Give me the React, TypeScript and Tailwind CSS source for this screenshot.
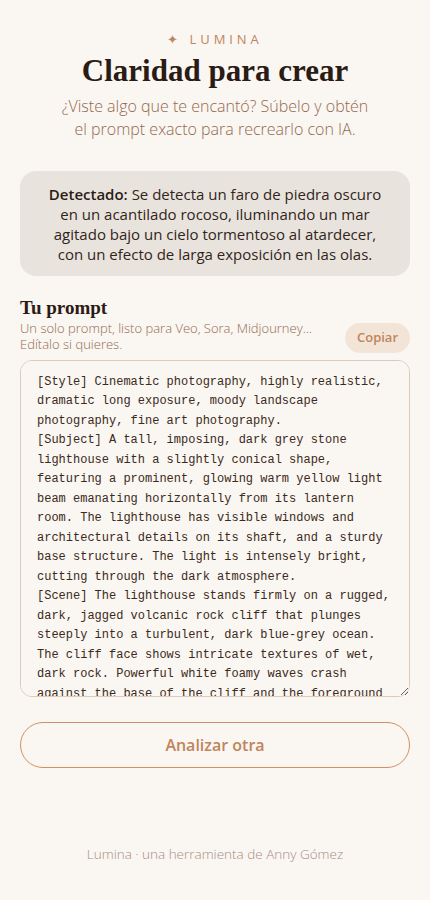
import React, { useState } from 'react';

const PROMPT = `[Style] Cinematic photography, highly realistic, dramatic long exposure, moody landscape photography, fine art photography.
[Subject] A tall, imposing, dark grey stone lighthouse with a slightly conical shape, featuring a prominent, glowing warm yellow light beam emanating horizontally from its lantern room. The lighthouse has visible windows and architectural details on its shaft, and a sturdy base structure. The light is intensely bright, cutting through the dark atmosphere.
[Scene] The lighthouse stands firmly on a rugged, dark, jagged volcanic rock cliff that plunges steeply into a turbulent, dark blue-grey ocean. The cliff face shows intricate textures of wet, dark rock. Powerful white foamy waves crash against the base of the cliff and the foreground rocks, their motion softened into a misty blur by the long exposure.`;

const sans = "font-['Open_Sans',sans-serif]";

export default function App() {
  const [prompt, setPrompt] = useState(PROMPT);

  return (
    <div className={`min-h-screen bg-[#faf6f2] ${sans}`}>
      <div className="flex flex-col px-5 pt-[30px] pb-10">
        {/* HEADER */}
        <div className="flex flex-col items-center text-center">
          <p className="text-[13px] font-medium tracking-[0.3em] text-[#c0855c]">✦ LUMINA</p>
          <h1 className="mt-[3px] font-['Liberation_Serif',serif] text-[31px] font-bold leading-[36px] text-[#2a1b14]">
            Claridad para crear
          </h1>
          <p className="mt-[6px] text-[16px] leading-[23px] font-light text-[#94694f]">
            ¿Viste algo que te encantó? Súbelo y obtén<br />el prompt exacto para recrearlo con IA.
          </p>
        </div>

        {/* DETECTED */}
        <div className="mt-[30px] rounded-2xl bg-[#e8e4dd] px-6 pt-[13px] pb-[12px] text-center text-[15px] leading-5 text-[#33241b]">
          <span className="font-semibold text-[#2a1b14]">Detectado:</span> Se detecta un faro de piedra oscuro en un acantilado rocoso, iluminando un mar agitado bajo un cielo tormentoso al atardecer, con un efecto de larga exposición en las olas.
        </div>

        {/* PROMPT */}
        <div className="mt-[20px] flex items-end justify-between gap-3">
          <div className="flex flex-col">
            <h2 className="font-['Liberation_Serif',serif] text-[19px] font-bold leading-6 text-[#2a1b14]">Tu prompt</h2>
            <p className="text-[13px] leading-4 font-light text-[#94694f]">
              Un solo prompt, listo para Veo, Sora, Midjourney…<br />Edítalo si quieres.
            </p>
          </div>
          <button className="mb-[-1px] rounded-full bg-[#f3e4d8] px-3 py-[5px] text-[13px] font-semibold text-[#c0855c]">
            Copiar
          </button>
        </div>

        <textarea
          value={prompt}
          onChange={(e) => setPrompt(e.target.value)}
          className="mt-2 h-[337px] w-full rounded-xl border border-[#dccabb] bg-[#faf6f2] px-4 pt-3 pb-2 font-['Liberation_Mono',monospace] text-[12px] leading-[19.5px] text-[#3a2a20] outline-none"
        />

        <button className="mt-[25px] h-[46px] w-full rounded-full border border-[#cf9164] text-[16px] font-semibold text-[#c0855c]">
          Analizar otra
        </button>

        <p className="mt-[76px] text-center text-[13.5px] font-light text-[#a88f80]">
          Lumina · una herramienta de Anny Gómez
        </p>
      </div>
    </div>
  );
}
